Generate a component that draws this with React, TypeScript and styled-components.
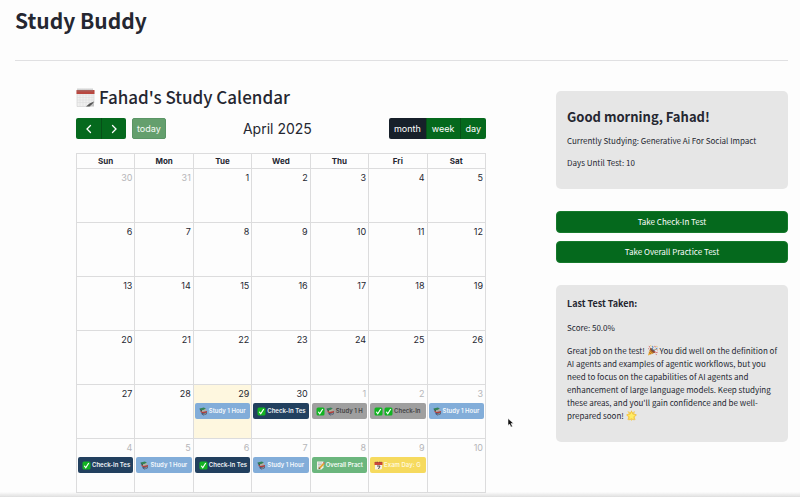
import React from 'react';
import styled, { createGlobalStyle, css } from 'styled-components';

const GlobalStyle = createGlobalStyle`
  * { box-sizing: border-box; }
  body {
    margin: 0;
    background: #fdfdfd;
    color: #252731;
    font-family: "Noto Sans CJK SC", "Noto Sans", sans-serif;
    overflow: hidden;
  }
  h1, h2, h3, p { margin: 0; }
`;

const Page = styled.div`
  padding: 5px 12px 0 15px;
`;

const PageHeader = styled.header`
  height: 56px;
  border-bottom: 1px solid #e0e0e2;
`;

const PageTitle = styled.h1`
  font-size: 21px;
  line-height: 30px;
  font-weight: 700;
`;

const Columns = styled.main`
  display: grid;
  grid-template-columns: 410fr 232fr;
  column-gap: 70px;
  align-items: start;
  padding: 24px 0 0 61px;
`;

const CalendarSection = styled.section`
  min-width: 0;
`;

const CalendarHeading = styled.h2`
  display: flex;
  align-items: center;
  gap: 4px;
  font-size: 17px;
  line-height: 24px;
  font-weight: 500;
`;

const Toolbar = styled.div`
  display: flex;
  justify-content: space-between;
  align-items: center;
  margin: 9px 0 14px;
  font-family: Inter, sans-serif;
`;

const ToolbarGroup = styled.div`
  display: flex;
`;

const ToolButton = styled.button<{ $active?: boolean }>`
  display: flex;
  align-items: center;
  justify-content: center;
  height: 21px;
  padding: 0 5px;
  border: 0;
  background: ${p => (p.$active ? '#17202a' : '#05691d')};
  color: #fff;
  font: 400 9px/12px Inter, sans-serif;
  & + & { border-left: 1px solid #075018; }
  &:first-child { border-radius: 2px 0 0 2px; }
  &:last-child { border-radius: 0 2px 2px 0; }
`;

const ArrowButton = styled(ToolButton)`
  width: 25px;
`;

const TodayButton = styled.button`
  height: 21px;
  margin-left: 6px;
  padding: 0 4px;
  border: 1px solid #5a9565;
  border-radius: 2px;
  background: #649f6d;
  color: #f4faf5;
  font: 400 9px/12px Inter, sans-serif;
`;

const MonthTitle = styled.h3`
  font-size: 14px;
  line-height: 21px;
  font-weight: 400;
`;

const MonthTable = styled.table`
  width: 100%;
  table-layout: fixed;
  border-collapse: collapse;
  font-family: Inter, sans-serif;
`;

const DayHead = styled.th`
  height: 15px;
  padding: 0;
  border: 1px solid #dcdcdd;
  font-size: 8px;
  line-height: 14px;
  font-weight: 700;
`;

const DayCell = styled.td<{ $today: boolean }>`
  height: 54px;
  padding: 2px 1px 0;
  border: 1px solid #dcdcdd;
  vertical-align: top;
  background: ${p => (p.$today ? '#fef7df' : 'transparent')};
`;

const DayNumber = styled.div<{ $outside: boolean }>`
  padding-right: 1px;
  text-align: right;
  font-size: 9px;
  line-height: 14px;
  color: ${p => (p.$outside ? '#b6b6b9' : '#252731')};
`;

type Kind = 'study' | 'check' | 'done' | 'overall' | 'exam';

const kinds = {
  study: css`background: #82add9; color: #f4f8fc;`,
  check: css`background: #22405f; color: #f1f4f7;`,
  done: css`background: #9f9f9f; color: #444;`,
  overall: css`background: #6bb67d; color: #f4fbf5;`,
  exam: css`background: #f6da5e; color: #fff8dc;`,
};

const EventButton = styled.button<{ $kind: Kind }>`
  display: flex;
  align-items: center;
  gap: 1px;
  width: 100%;
  height: 16px;
  margin-top: 2px;
  padding: 0 1px 0 4px;
  border: 0;
  border-radius: 2px;
  font: 600 6px/10px Inter, sans-serif;
  text-align: left;
  ${p => kinds[p.$kind]}
`;

const EventText = styled.span`
  white-space: nowrap;
`;

const Icon = styled.svg<{ $size: number }>`
  flex: none;
  width: ${p => p.$size}px;
  height: ${p => p.$size}px;
`;

const InlineIcon = styled(Icon)`
  vertical-align: -2px;
`;

const Sidebar = styled.aside`
  min-width: 0;
  padding-top: 6px;
`;

const Card = styled.section`
  padding: 12px 8px 20px 11px;
  border-radius: 5px;
  background: #e6e6e6;
`;

const Greeting = styled.h2`
  font-size: 13px;
  line-height: 28px;
  font-weight: 700;
`;

const CardTitle = styled.h3`
  font-size: 9px;
  line-height: 14px;
  font-weight: 700;
`;

const CardText = styled.p<{ $gap: number }>`
  margin-top: ${p => p.$gap}px;
  font-size: 8px;
  line-height: 13px;
`;

const Actions = styled.div`
  display: grid;
  gap: 8px;
  margin: 22px 0;
`;

const ActionButton = styled.button`
  height: 22px;
  border: 1px solid #15792b;
  border-radius: 4px;
  background: #05691d;
  color: #fff;
  font: 400 8px/12px "Noto Sans CJK SC", sans-serif;
`;

const BottomShade = styled.div`
  position: fixed;
  inset: auto 0 0;
  height: 5px;
  background: linear-gradient(rgba(225, 225, 225, 0), #dedede);
  pointer-events: none;
`;

const Cursor = styled.svg`
  position: fixed;
  left: 507px;
  top: 418px;
  width: 7px;
  height: 10px;
  pointer-events: none;
`;

const CheckIcon = () => (
  <Icon $size={9} viewBox="0 0 18 18" aria-hidden="true">
    <rect x="1" y="1" width="16" height="16" rx="3" fill="#12b322" />
    <path d="M4.5 9.5l3 4L13.5 4" fill="none" stroke="#fff" strokeWidth="2.4" />
  </Icon>
);

const BooksIcon = () => (
  <Icon $size={9} viewBox="0 0 18 18" aria-hidden="true">
    <path d="M1 3l9-2 4 3-8 3z" fill="#348356" />
    <path d="M1 3l5 4v3L2 6z" fill="#1b5941" />
    <path d="M6 7l8-3v3l-8 3z" fill="#b9b09a" />
    <path d="M3 7l4 3 9-2v3l-8 2-5-3z" fill="#b93d35" />
    <path d="M5 11l3 2 8-2v3l-7 3-4-3z" fill="#394e70" />
    <path d="M9 14l6-2v1l-6 3z" fill="#b9b0a0" />
  </Icon>
);

const MemoIcon = () => (
  <Icon $size={9} viewBox="0 0 18 18" aria-hidden="true">
    <path d="M2 1h13v12l-4 4H2z" fill="#f1f0e9" />
    <path d="M4 4h8M4 7h7M4 10h5M4 13h4" stroke="#87949b" />
    <path d="M6 13L14 4l3 2-8 9-4 1z" fill="#e5a42e" />
    <path d="M14 4l1-2 3 2-1 2z" fill="#d85f67" />
    <path d="M6 13l3 2-4 1z" fill="#4b4640" />
  </Icon>
);

const DateIcon = () => (
  <Icon $size={9} viewBox="0 0 18 18" aria-hidden="true">
    <path d="M2 2h14v13l-2 2H2z" fill="#f5f0e8" />
    <path d="M1 2h16v6H1z" fill="#cb4639" />
    <path d="M4 1v3m3-3v3m4-3v3m3-3v3" stroke="#654c44" />
    <path d="M6 10h6l-3 6" fill="none" stroke="#514b49" strokeWidth="2" />
  </Icon>
);

const NotepadIcon = () => (
  <Icon $size={19} viewBox="0 0 38 38" aria-hidden="true">
    <path d="M2 6h34v24l-7 7H2z" fill="#f0f0ef" stroke="#c7c7c7" />
    <path d="M2 14h34M2 19h34M2 24h34M2 29h30M8 12v25m6-25v25m6-25v25m6-25v25m6-25v18" stroke="#dadada" />
    <path d="M1 4h36v8H1z" fill="#b9473f" />
    <path d="M4 1v6m4-6v6m4-6v6m4-6v6m4-6v6m4-6v6m4-6v6m4-6v6" stroke="#8e8e8e" strokeWidth="1.5" />
    <path d="M20 37l7-6 9-4-1 4-8 6z" fill="#555" />
    <path d="M28 37l8-9v9z" fill="#c4c4c4" />
  </Icon>
);

const PartyIcon = () => (
  <InlineIcon $size={11} viewBox="0 0 24 24" aria-hidden="true">
    <path d="M7 8l9 9L2 23z" fill="#e9aa2d" />
    <path d="M6 12l7 7M4 16l5 4" stroke="#ad6727" strokeWidth="2" />
    <ellipse cx="12" cy="12" rx="3" ry="7" transform="rotate(-45 12 12)" fill="#864e35" />
    <path d="M12 11c-2-4 3-4 0-9M15 13c2-6 6-1 7-7" fill="none" stroke="#397dbe" strokeWidth="2" />
    <path d="M15 15c3-2 4 3 8 1" fill="none" stroke="#cf4e55" strokeWidth="2" />
    <path d="M4 3l3 2M17 2l1 3M21 10l2 1M19 20l2 1M3 8l2 1" stroke="#d2503f" strokeWidth="2" />
    <path d="M8 1l1 2M21 2l1 2M17 9l2 1" stroke="#e9b530" strokeWidth="2" />
  </InlineIcon>
);

const StarIcon = () => (
  <InlineIcon $size={11} viewBox="0 0 24 24" aria-hidden="true">
    <path d="M12 0l2 5 6-3-2 6 6 3-5 4 2 7-6-2-3 4-3-4-6 2 2-7-5-4 6-3-3-6 7 3z" fill="#f4cf65" />
    <path d="M12 3l3 6 7 1-5 5 1 7-6-3-6 3 1-7-5-5 7-1z" fill="#ffed66" stroke="#ecae29" />
  </InlineIcon>
);

interface CalendarEvent {
  kind: Kind;
  text: string;
  icons: React.ComponentType[];
}

const study: CalendarEvent = { kind: 'study', text: 'Study 1 Hour', icons: [BooksIcon] };
const check: CalendarEvent = { kind: 'check', text: 'Check-In Tes', icons: [CheckIcon] };

const eventsByIndex: Record<number, CalendarEvent> = {
  30: study,
  31: check,
  32: { kind: 'done', text: 'Study 1 H', icons: [CheckIcon, BooksIcon] },
  33: { kind: 'done', text: 'Check-In', icons: [CheckIcon, CheckIcon] },
  34: study,
  35: check,
  36: study,
  37: check,
  38: study,
  39: { kind: 'overall', text: 'Overall Pract', icons: [MemoIcon] },
  40: { kind: 'exam', text: 'Exam Day: G', icons: [DateIcon] },
};

const weekdays = ['Sun', 'Mon', 'Tue', 'Wed', 'Thu', 'Fri', 'Sat'];
const firstDay = new Date(2025, 2, 30);
const todayIndex = 30;

const weeks = Array.from({ length: 6 }, (_, w) =>
  Array.from({ length: 7 }, (_, d) => {
    const index = w * 7 + d;
    const date = new Date(firstDay.getFullYear(), firstDay.getMonth(), firstDay.getDate() + index);
    return { index, day: date.getDate(), outside: date.getMonth() !== 3 };
  }),
);

const Arrow = ({ d }: { d: string }) => (
  <Icon $size={10} viewBox="0 0 10 10" aria-hidden="true">
    <path d={d} fill="none" stroke="#fff" strokeWidth="1.3" strokeLinecap="round" />
  </Icon>
);

const EventItem = ({ event }: { event: CalendarEvent }) => (
  <EventButton $kind={event.kind}>
    {event.icons.map((Glyph, i) => <Glyph key={i} />)}
    <EventText>{event.text}</EventText>
  </EventButton>
);

export default function App() {
  return (
    <>
      <GlobalStyle />
      <Page>
        <PageHeader>
          <PageTitle>Study Buddy</PageTitle>
        </PageHeader>
        <Columns>
          <CalendarSection>
            <CalendarHeading><NotepadIcon />Fahad's Study Calendar</CalendarHeading>
            <Toolbar>
              <ToolbarGroup>
                <ToolbarGroup>
                  <ArrowButton aria-label="Previous month"><Arrow d="M6.5 1.5L3 5l3.5 3.5" /></ArrowButton>
                  <ArrowButton aria-label="Next month"><Arrow d="M3.5 1.5L7 5 3.5 8.5" /></ArrowButton>
                </ToolbarGroup>
                <TodayButton disabled>today</TodayButton>
              </ToolbarGroup>
              <MonthTitle>April 2025</MonthTitle>
              <ToolbarGroup>
                <ToolButton $active aria-pressed="true">month</ToolButton>
                <ToolButton>week</ToolButton>
                <ToolButton>day</ToolButton>
              </ToolbarGroup>
            </Toolbar>
            <MonthTable>
              <thead>
                <tr>{weekdays.map(name => <DayHead key={name} scope="col">{name}</DayHead>)}</tr>
              </thead>
              <tbody>
                {weeks.map((week, w) => (
                  <tr key={w}>
                    {week.map(({ index, day, outside }) => (
                      <DayCell key={index} $today={index === todayIndex}>
                        <DayNumber $outside={outside}>{day}</DayNumber>
                        {eventsByIndex[index] && <EventItem event={eventsByIndex[index]} />}
                      </DayCell>
                    ))}
                  </tr>
                ))}
              </tbody>
            </MonthTable>
          </CalendarSection>
          <Sidebar>
            <Card>
              <Greeting>Good morning, Fahad!</Greeting>
              <CardText $gap={3}>Currently Studying: Generative Ai For Social Impact</CardText>
              <CardText $gap={9}>Days Until Test: 10</CardText>
            </Card>
            <Actions>
              <ActionButton>Take Check-In Test</ActionButton>
              <ActionButton>Take Overall Practice Test</ActionButton>
            </Actions>
            <Card>
              <CardTitle>Last Test Taken:</CardTitle>
              <CardText $gap={10}>Score: 50.0%</CardText>
              <CardText $gap={10}>
                Great job on the test! <PartyIcon /> You did well on the definition of AI agents and
                examples of agentic workflows, but you need to focus on the capabilities of AI agents
                and enhancement of large language models. Keep studying these areas, and you'll gain
                confidence and be well-prepared soon! <StarIcon />
              </CardText>
            </Card>
          </Sidebar>
        </Columns>
      </Page>
      <BottomShade />
      <Cursor viewBox="0 0 14 20" aria-hidden="true">
        <path d="M2 1v14l3-3 3 6 3-1-3-6h5z" fill="#111" stroke="#fff" />
      </Cursor>
    </>
  );
}
